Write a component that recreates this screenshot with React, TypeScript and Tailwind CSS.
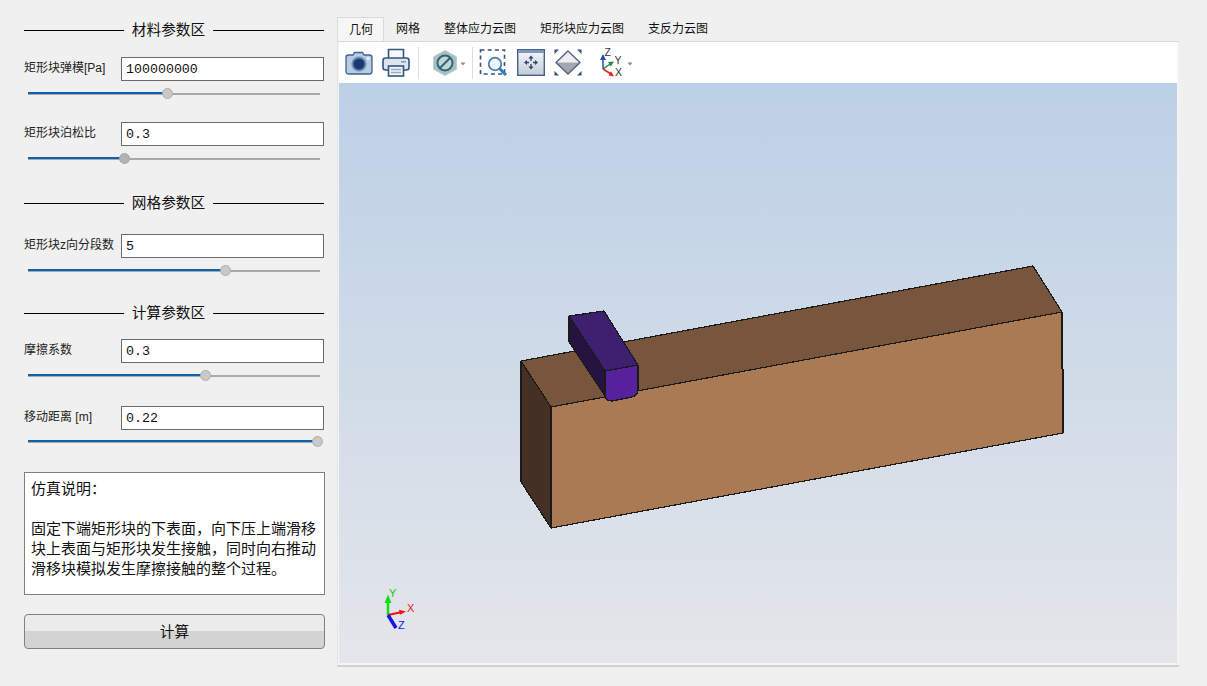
const Heading = ({ title, className }: { title: string; className: string }) => (
  <div className={`flex items-center h-5 w-[300px] ${className}`}>
    <div className="w-[100px] h-px bg-black" />
    <span className="w-[89px] text-center text-[14.67px] leading-5 text-[#111]">{title}</span>
    <div className="w-[111px] h-px bg-black" />
  </div>
);

const Field = ({
  label,
  value,
  pos,
  dark,
  tight,
  className,
}: {
  label: string;
  value: string;
  pos: number;
  dark?: boolean;
  tight?: boolean;
  className: string;
}) => (
  <div className={className}>
    <div className="flex items-center h-6">
      <label className="w-[97px] text-xs leading-4 text-[#222] -mt-0.5 whitespace-nowrap">{label}</label>
      <input
        readOnly
        value={value}
        className="w-[203px] h-6 bg-white border border-[#6a6a6a] px-1 pt-px text-[13.3px] text-[#111] font-['Liberation_Mono','Noto_Sans_CJK_SC',monospace] outline-none"
      />
    </div>
    <div className={tight ? "relative ml-1 mt-1.5 w-[292px] h-[11px] flex items-center" : "relative ml-1 mt-[7px] w-[292px] h-[11px] flex items-center"}>
      <div className="w-full h-[2px] bg-[#a9a9a9]" />
      <div className="absolute left-0 top-1 h-[2px] bg-[#0a62b0]" style={{ width: pos }} />
      <div
        className={
          dark
            ? "absolute top-0 w-[11px] h-[11px] rounded-full bg-[#b0b3b5] border border-[#a5a8aa]"
            : "absolute top-0 w-[11px] h-[11px] rounded-full bg-[#c9c9c9] border border-[#aeaeae]"
        }
        style={{ left: pos - 5 }}
      />
    </div>
  </div>
);

const Tab = ({ title, active }: { title: string; active?: boolean }) =>
  active ? (
    <div className="h-6 pl-[11px] pr-[10px] bg-[#f6f6f6] border border-b-0 border-[#d9d9d9] text-xs leading-[25px] text-[#111]">
      {title}
    </div>
  ) : (
    <div className="h-6 px-3 text-xs leading-[25px] text-[#111]">{title}</div>
  );

const Separator = () => <div className="w-px h-8 bg-[#dcdcdc]" />;

const SmallArrow = () => (
  <svg width="6" height="4" viewBox="0 0 6 4" className="mt-[3px]">
    <path d="M0.5 0.5h5L3 3.5z" fill="#8a8a8a" />
  </svg>
);

const CameraIcon = () => (
  <svg width="28" height="24" viewBox="0 0 28 24">
    <path d="M1 6.5Q1 4 3.5 4H8l1.5-2.5h8L19 4h5.5Q27 4 27 6.5v14Q27 23 24.5 23h-21Q1 23 1 20.5z" fill="#b7cbe3" stroke="#41618f" strokeWidth="1.3" />
    <circle cx="14" cy="13" r="7.6" fill="#6d8db8" />
    <circle cx="14" cy="13" r="5.6" fill="#1c3a72" />
    <rect x="22" y="6.5" width="2.5" height="2" fill="#ffffff" />
  </svg>
);

const PrinterIcon = () => (
  <svg width="28" height="29" viewBox="0 0 28 29">
    <path d="M6.5 11V1.5h15V11" fill="#f6f8fb" stroke="#35547f" strokeWidth="1.6" />
    <rect x="1" y="10" width="26" height="12" rx="2.5" fill="#dde4ee" stroke="#35547f" strokeWidth="1.6" />
    <rect x="19" y="13" width="5" height="1.6" fill="#8a9db8" />
    <rect x="6.5" y="18" width="15" height="10" fill="#f2f4f8" stroke="#35547f" strokeWidth="1.6" />
    <path d="M9 21.5h10M9 24.5h10" stroke="#9aaac0" strokeWidth="1.3" />
  </svg>
);

const HexIcon = () => (
  <svg width="24" height="26" viewBox="0 0 24 26">
    <path d="M12 0.5L23.5 6.8V19.2L12 25.5L0.5 19.2V6.8z" fill="#a8c0c5" stroke="#b9cdd0" />
    <circle cx="12" cy="13" r="7.5" fill="#c3d4d6" stroke="#2f6670" strokeWidth="2" />
    <path d="M7 18L17 8" stroke="#2f6670" strokeWidth="2" />
  </svg>
);

const ZoomBoxIcon = () => (
  <svg width="28" height="27" viewBox="0 0 28 27">
    <rect x="1.5" y="1" width="24" height="24" fill="none" stroke="#34527f" strokeWidth="1.6" strokeDasharray="4 3.2" />
    <circle cx="16" cy="15" r="6.3" fill="#eef4fa" stroke="#4a7fb5" strokeWidth="1.8" />
    <path d="M20.5 19.5L27 26" stroke="#2a7fc0" strokeWidth="3" />
  </svg>
);

const FitIcon = () => (
  <svg width="28" height="27" viewBox="0 0 28 27">
    <defs>
      <linearGradient id="fitBg" x1="0" y1="0" x2="0" y2="1">
        <stop offset="0" stopColor="#f5f7fa" />
        <stop offset="1" stopColor="#c3ccd9" />
      </linearGradient>
    </defs>
    <rect x="0.7" y="0.7" width="26.6" height="25.6" fill="url(#fitBg)" stroke="#46628c" strokeWidth="1.4" />
    <rect x="1" y="1" width="26" height="3" fill="#7f97ba" />
    <path d="M14 9v3M14 15v3M9 13.5h3M16 13.5h3" stroke="#2b4470" strokeWidth="1.3" />
    <path d="M14 6.5l-2.6 3h5.2zM14 20.5l-2.6-3h5.2zM7 13.5l3-2.6v5.2zM21 13.5l-3-2.6v5.2z" fill="#2b4470" />
  </svg>
);

const DiamondIcon = () => (
  <svg width="28" height="27" viewBox="0 0 28 27">
    <path d="M14 2L26 13.5H2z" fill="#eceef2" />
    <path d="M2 13.5H26L14 25z" fill="#a4a8ae" />
    <path d="M14 2L26 13.5L14 25L2 13.5z" fill="none" stroke="#52647f" strokeWidth="1.4" />
    <path d="M0.5 0.5h4.5l-4.5 4.5zM27.5 0.5h-4.5l4.5 4.5zM0.5 26.5h4.5l-4.5-4.5zM27.5 26.5h-4.5l4.5-4.5z" fill="#2f5488" />
  </svg>
);

const AxesIcon = () => (
  <svg width="28" height="34" viewBox="0 -2 28 34" className="font-['Liberation_Sans',sans-serif]">
    <path d="M4 21V9" stroke="#1f4fa8" strokeWidth="1.5" />
    <path d="M4 6L1 12h6z" fill="#1f4fa8" />
    <path d="M4 21L12 15.5" stroke="#1d8a3a" strokeWidth="1.5" />
    <path d="M15 13.5L9 14l2.8 4.4z" fill="#1d8a3a" />
    <path d="M4 21L12 26" stroke="#d8262c" strokeWidth="1.5" />
    <path d="M15 28.5l-3-5.3-2.4 4.4z" fill="#d8262c" />
    <text x="5.5" y="8" fontSize="10.5" fill="#333">Z</text>
    <text x="15.5" y="16" fontSize="10.5" fill="#333">Y</text>
    <text x="16" y="28" fontSize="10.5" fill="#333">X</text>
  </svg>
);

const Scene = () => (
  <svg viewBox="339 83 838 580" className="w-full h-full font-['Liberation_Sans',sans-serif]">
    <g stroke="#1c1a18" strokeWidth="1.2" shapeRendering="crispEdges" strokeLinejoin="round">
      <polygon points="521,361 1033,266 1062,312 551,407" fill="#78563d" />
      <polygon points="521,361 551,407 551,528 521,482" fill="#443025" />
      <polygon points="551,407 1062,312 1062,369 1063,369 1063,433 551,528" fill="#a97a54" />
      <polygon points="569,316 605,371 605,396 569,342" fill="#24143f" />
      <polygon points="569,316 604,311 638,365 605,371" fill="#3e1f70" />
      <path d="M605 371L638 365V390Q638 395 632 397L612 401Q605 401 605 396Z" fill="#55219c" />
    </g>
    <g fill="none">
      <path d="M388 615V600" stroke="#12e012" strokeWidth="2.5" />
      <path d="M388 594.5l-3.5 8.5h7z" fill="#12e012" />
      <path d="M388 615L402 612" stroke="#f01010" strokeWidth="2" />
      <path d="M406 611.5l-7-1.8 1 5z" fill="#f01010" />
      <path d="M388 615L396 628" stroke="#1414e8" strokeWidth="3.5" />
      <text x="389" y="597" fontSize="11" fill="#10c810">Y</text>
      <text x="407" y="612" fontSize="11" fill="#f01010">X</text>
      <text x="398" y="629" fontSize="11" fill="#1414e8">Z</text>
    </g>
  </svg>
);

export default function App() {
  return (
    <div className="w-[1207px] h-[686px] overflow-hidden flex bg-[#f0f0f0] font-['Liberation_Sans','Noto_Sans_CJK_SC',sans-serif]">
      <div className="w-[337px] shrink-0 pl-6 pt-5">
        <Heading title="材料参数区" className="" />
        <Field label="矩形块弹模[Pa]" value="100000000" pos={139} className="mt-[17px]" />
        <Field label="矩形块泊松比" value="0.3" pos={96} dark className="mt-[23px]" />
        <Heading title="网格参数区" className="mt-[29px]" />
        <Field label="矩形块z向分段数" value="5" pos={197} className="mt-[21px]" />
        <Heading title="计算参数区" className="mt-[27px]" />
        <Field label="摩擦系数" value="0.3" pos={177} className="mt-4" />
        <Field label="移动距离 [m]" value="0.22" pos={289} tight className="mt-[25px]" />
        <div className="mt-[25px] w-[301px] h-[123px] bg-white border border-[#808080] px-1.5 pt-1.5 text-[15px] leading-5 text-[#111]">
          <p>仿真说明：</p>
          <p className="mt-5">固定下端矩形块的下表面，向下压上端滑移块上表面与矩形块发生接触，同时向右推动滑移块模拟发生摩擦接触的整个过程。</p>
        </div>
        <button className="mt-[19px] block w-[301px] h-[35px] rounded-sm border border-[#808080] bg-linear-to-b from-[#ebebeb] from-50% to-[#d3d3d3] to-50% text-[14.67px] text-[#111]">
          计算
        </button>
      </div>

      <div className="w-[842px] pt-[17px]">
        <div className="flex">
          <Tab title="几何" active />
          <Tab title="网格" />
          <Tab title="整体应力云图" />
          <Tab title="矩形块应力云图" />
          <Tab title="支反力云图" />
        </div>
        <div className="h-[626px] flex flex-col bg-[#f4f4f4] border-t border-l border-b-2 border-t-[#d9d9d9] border-l-[#e4e4e4] border-b-[#d0d0d0] pl-px pr-0.5 pb-0.5">
          <div className="h-[41px] shrink-0 bg-white flex items-center pl-[6px]">
            <CameraIcon />
            <div className="ml-[9px]"><PrinterIcon /></div>
            <div className="ml-2"><Separator /></div>
            <div className="ml-[14px]"><HexIcon /></div>
            <div className="ml-[3px]"><SmallArrow /></div>
            <div className="ml-1.5"><Separator /></div>
            <div className="ml-1.5"><ZoomBoxIcon /></div>
            <div className="ml-2.5"><FitIcon /></div>
            <div className="ml-[9px]"><DiamondIcon /></div>
            <div className="ml-[17px]"><AxesIcon /></div>
            <div><SmallArrow /></div>
          </div>
          <div className="flex-1 min-h-0 bg-linear-to-b from-[#bcd0e6] to-[#e4e6ea]">
            <Scene />
          </div>
        </div>
      </div>
    </div>
  );
}
